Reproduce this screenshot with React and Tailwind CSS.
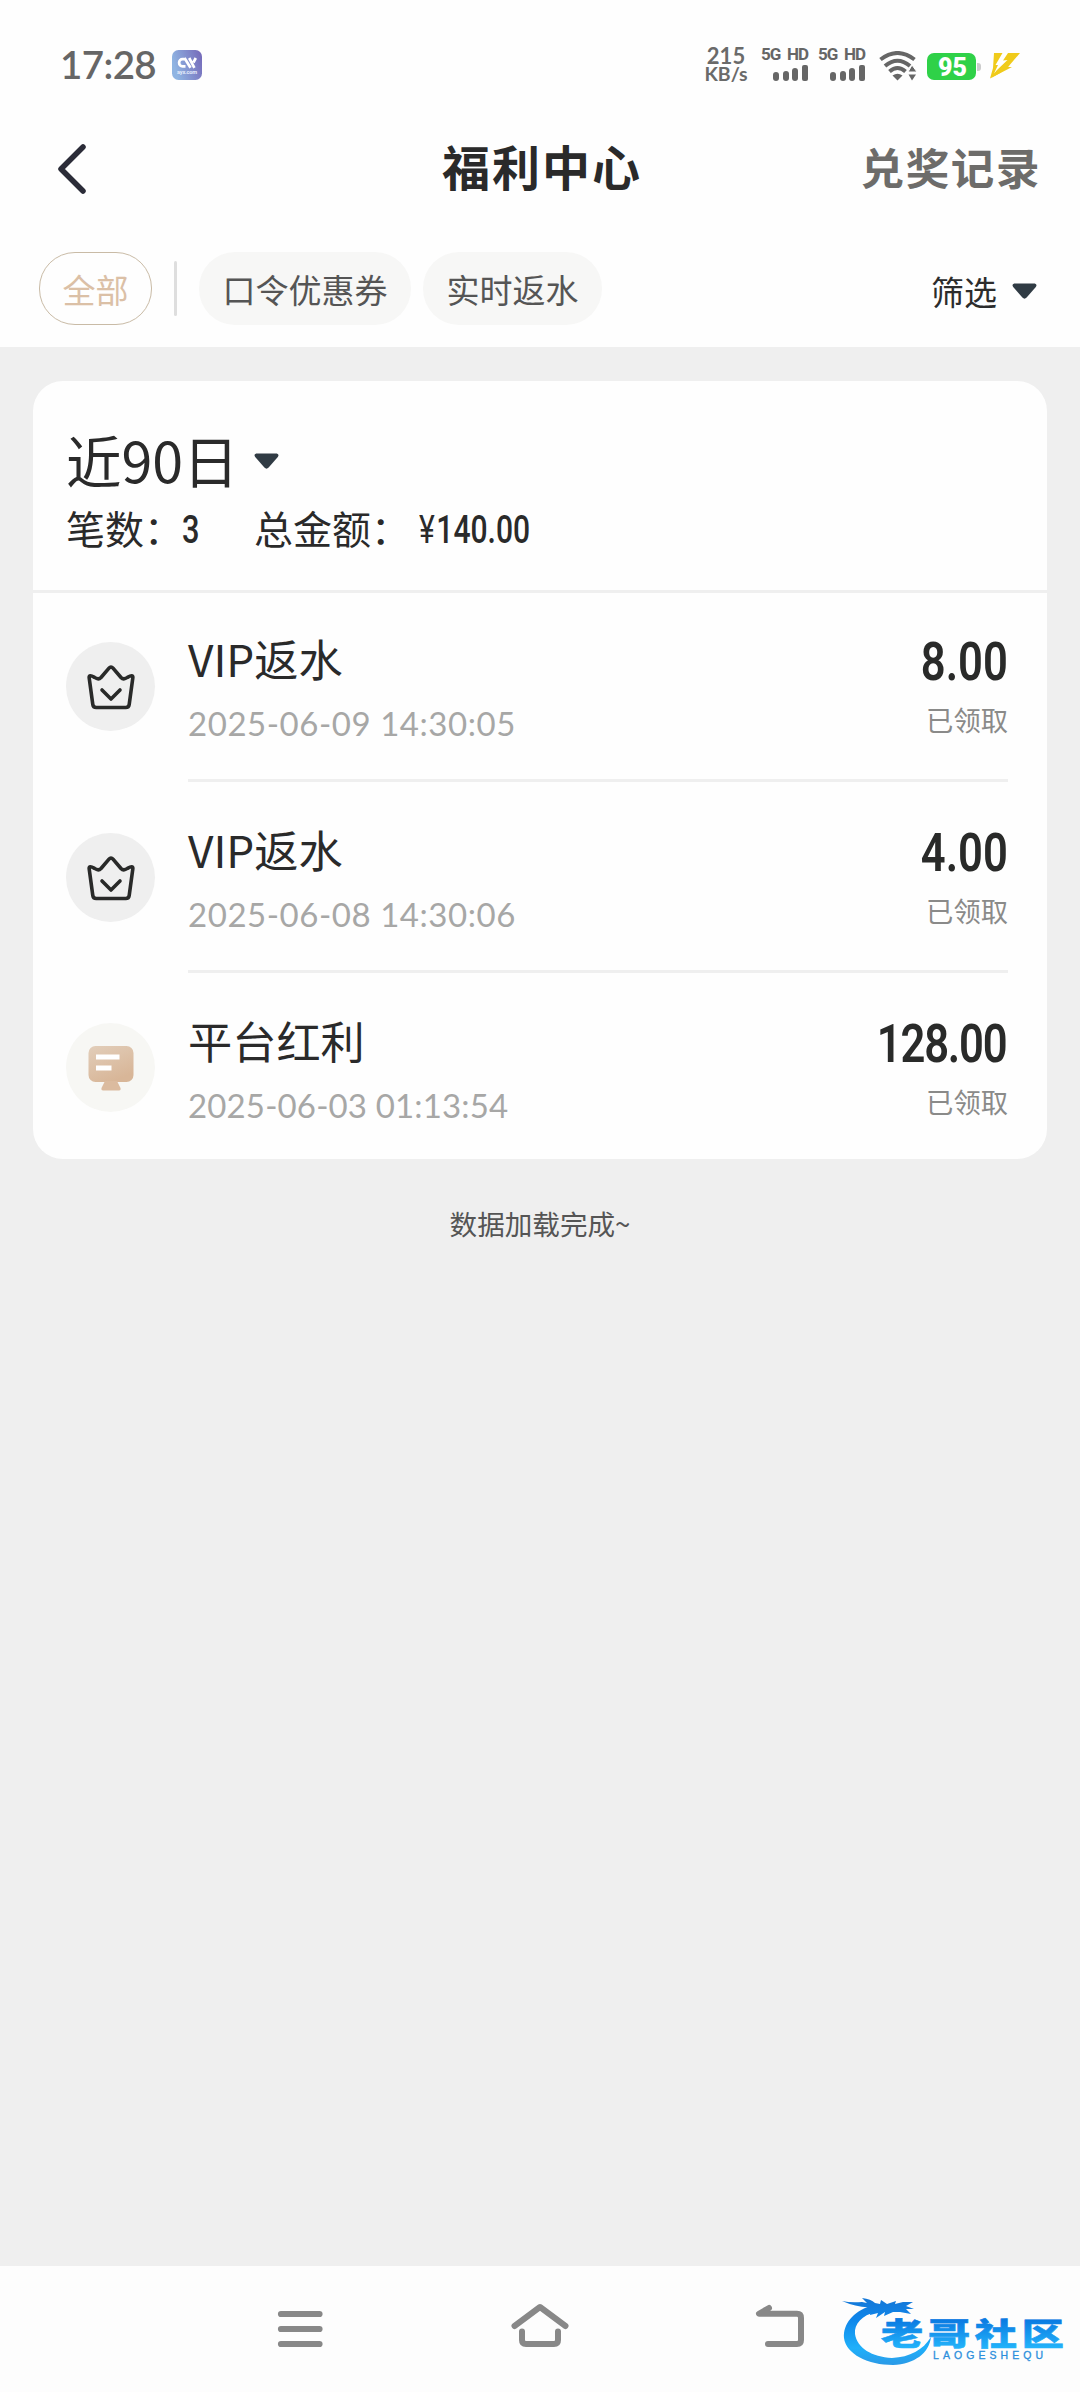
import React from "react";

const CJK = "font-['Noto_Sans_CJK_SC','Noto_Sans',sans-serif]";
const LATO = "font-['Lato','Noto_Sans_CJK_SC',sans-serif]";
const ROBOTO = "font-['Roboto','Noto_Sans_CJK_SC',sans-serif]";

const records = [
  { icon: "crown", title: "VIP返水", time: "2025-06-09 14:30:05", amount: "8.00", status: "已领取", tracking: "tracking-[0.55px]", amountFit: "scale-x-[0.8]" },
  { icon: "crown", title: "VIP返水", time: "2025-06-08 14:30:06", amount: "4.00", status: "已领取", tracking: "tracking-[0.55px]", amountFit: "scale-x-[0.8]" },
  { icon: "board", title: "平台红利", time: "2025-06-03 01:13:54", amount: "128.00", status: "已领取", tracking: "tracking-[0.15px]", amountFit: "scale-x-[0.8] tracking-[-1.5px] pr-[1.5px]" },
];

function Caret() {
  return (
    <svg className="block h-4 w-[25px]" viewBox="0 0 25 16">
      <path d="M2.2 0.5H22.8Q25.6 1.5 23.8 4L14.6 14.6Q12.5 16.8 10.4 14.6L1.2 4Q-.6 1.5 2.2.5Z" fill="#303b44" />
    </svg>
  );
}

function Signal() {
  return (
    <div className="flex w-[47px] flex-col items-end">
      <div className={`${ROBOTO} flex h-[17px] w-[47px] justify-between text-[17px] leading-[17px] font-bold text-[#666]`}>
        <span className="tracking-[-1px]">5G</span>
        <span className="tracking-[-1px]">HD</span>
      </div>
      <div className="mt-[2px] flex h-4 w-[35px] items-end justify-between">
        <i className="h-[9px] w-[6px] rounded-[3px] bg-[#666]" />
        <i className="h-[10px] w-[6px] rounded-[3px] bg-[#666]" />
        <i className="h-[13px] w-[6px] rounded-[3px] bg-[#666]" />
        <i className="h-4 w-[6px] rounded-[2px] bg-[#666]" />
      </div>
    </div>
  );
}

function StatusBar() {
  return (
    <div className="flex h-[128px] items-start pt-[46px] pl-[60px]">
      <div className={`${LATO} mt-[-5px] w-[112px] text-[38.5px] leading-[46px] font-semibold tracking-[-0.6px] text-[#666]`}>17:28</div>
      <svg className="mt-1 h-[30px] w-[30px]" viewBox="0 0 30 30">
        <defs>
          <linearGradient id="app" x1="0" y1="0.3" x2="1" y2="0">
            <stop offset="0" stopColor="#8fb4e2" />
            <stop offset="1" stopColor="#7467b8" />
          </linearGradient>
        </defs>
        <rect width="30" height="30" rx="6.5" fill="url(#app)" />
        <path d="M13.5 9.2H10.5a3.4 3.6 0 1 0 0 7.2H13.5M12.5 8l6 9.8M17.2 8l5.2 9.8M23.8 8l-2.4 4.5" fill="none" stroke="#fff" strokeWidth="2.7" />
        <text x="5" y="24.2" textLength="20" fontSize="5.6" fontFamily="Roboto" fontWeight="700" fill="#e4ebfa">ayx.com</text>
      </svg>
      <div className={`${LATO} ml-[501px] flex w-[46px] flex-col items-center font-bold text-[#6a6a6a]`}>
        <span className="h-[19px] text-[22px] leading-[19px]">215</span>
        <span className="h-[18px] text-[19.5px] leading-[18px]">KB/s</span>
      </div>
      <div className="ml-[12px] flex gap-[10px]">
        <Signal />
        <Signal />
      </div>
      <svg className="mt-[5px] ml-[14px] h-[30px] w-[38px]" viewBox="0 0 38 30">
        <g fill="none" stroke="#666" strokeWidth="4">
          <path d="M1.5 8.5Q18.5-4.5 35.5 8.5" />
          <path d="M6 15Q18.5 4.5 31 15" />
          <path d="M10.5 20.5Q18.5 13.5 26.5 20.5" />
        </g>
        <path d="M13.5 24.5Q18.5 21 23.5 24.5L18.5 29.5Z" fill="#666" />
        <path d="M33 14l5 7h-9z" fill="#666" stroke="#fff" strokeWidth="1" />
        <path d="M33 29.5l4-6h-7.500z" fill="#666" />
      </svg>
      <div className="mt-[7px] ml-[10px] flex items-center">
        <div className={`${ROBOTO} flex h-[27px] w-[49px] items-center justify-center rounded-[7px] bg-[#2fd148] text-[25px] leading-[27px] font-black text-white`}>
          <span className="mt-px ml-[2px]">95</span>
        </div>
        <i className="ml-px h-2 w-[4px] rounded-r-[3px] bg-[#ccc]" />
      </div>
      <svg className="mt-[7px] ml-[9px] h-[26px] w-[30px]" viewBox="0 0 30 26">
        <path d="M4 0H30L18 14H22L0 25.500L3 15Z" fill="#f0cb1b" />
        <path d="M12.500 0H18L13 7.500L17.500 7L7 17L4 20.500L8 12H5.500Z" fill="#fff" />
        <path d="M12 16L20 12L10 20L1 25Z" fill="#f0cb1b" />
      </svg>
    </div>
  );
}

function Header() {
  return (
    <div className={`${CJK} grid h-[82px] grid-cols-[1fr_200px_1fr] items-center`}>
      <svg className="ml-[57px] h-[50px] w-[30px]" viewBox="0 0 30 50">
        <path d="M26 3L4 25L26 47" fill="none" stroke="#2b2c38" strokeWidth="5.5" strokeLinecap="round" strokeLinejoin="round" />
      </svg>
      <h1 className="mt-[-8px] pl-[2px] text-[48px] leading-[60px] font-bold tracking-[2px] whitespace-nowrap text-[#2a2a2a]">福利中心</h1>
      <span className="mt-[-5px] mr-[39px] justify-self-end text-[43.5px] leading-[60px] font-bold tracking-[1.6px] text-[#6d6c6a]">兑奖记录</span>
    </div>
  );
}

function Filters() {
  return (
    <div className={`${CJK} flex h-[137px] items-start pt-[42px] pr-[43px] pl-[39px] text-[33px] leading-[74px] text-[#555]`}>
      <div className="flex h-[73px] w-[113px] justify-center rounded-[36px] border border-[#c9bba6] leading-[73px] text-[#dbc0a6]">全部</div>
      <i className="mt-[9px] ml-[22px] h-[55px] w-[3px] rounded bg-[#dedede]" />
      <div className="ml-[22px] flex h-[73px] w-[212px] justify-center rounded-[36px] bg-[#f7f7f6]">口令优惠券</div>
      <div className="ml-[12px] flex h-[73px] w-[179px] justify-center rounded-[36px] bg-[#f7f7f6]">实时返水</div>
      <div className="mt-[2px] ml-auto flex items-center gap-[15px] text-[#2c2c2c]">
        <span>筛选</span>
        <Caret />
      </div>
    </div>
  );
}

function RecordIcon({ kind }) {
  if (kind === "crown") {
    return (
      <div className="flex h-[89px] w-[89px] items-center justify-center rounded-full bg-[#efefef]">
        <svg className="h-[46px] w-[48px]" viewBox="0 0 48 46" fill="none" stroke="#292a29" strokeWidth="3.600" strokeLinecap="round" strokeLinejoin="round">
          <path d="M22 4.200Q24 1.800 26 4.200L34 13.500Q36.500 16.200 40.500 13.400Q46.500 9.700 45.800 14L42.200 40.500Q41.800 43.500 38.800 43.500H9.200Q6.200 43.500 5.800 40.500L2.200 14Q1.500 9.700 7.500 13.400Q11.500 16.200 14 13.500Z" />
          <path d="M15 26L24 35L33 26" />
        </svg>
      </div>
    );
  }
  return (
    <div className="mt-[-1px] flex h-[89px] w-[89px] items-center justify-center rounded-full bg-[#f7f7f4]">
      <svg className="h-[46px] w-[46px]" viewBox="0 0 46 46">
        <defs>
          <linearGradient id="board" x1="0" y1="0" x2="0.500" y2="1">
            <stop offset="0" stopColor="#e2ceba" />
            <stop offset="1" stopColor="#d8b698" />
          </linearGradient>
        </defs>
        <rect x="0.500" y="1" width="45" height="36" rx="7" fill="url(#board)" />
        <path d="M17 36H29L32.500 43Q33 45.500 31 45.500H15Q13 45.500 13.500 43Z" fill="#dbbb9f" />
        <path d="M8 9.500H31.500V14.500H8ZM8 20.500H23.500V25.500H8Z" fill="#fff" />
      </svg>
    </div>
  );
}

function Record({ item, last }) {
  return (
    <div className="flex h-[191px] pl-[33px]">
      <div className="mt-[51px]">
        <RecordIcon kind={item.icon} />
      </div>
      <div className={`mr-[39px] ml-[33px] flex grow justify-between ${last ? "" : "border-b-[3px] border-[#efefef]"}`}>
        <div className="flex flex-col pt-[37px]">
          <span className={`${CJK} text-[44.2px] leading-[60px] text-[#2a2a2a]`}>{item.title}</span>
          <span className={`${LATO} ${item.tracking} mt-[13px] text-[33px] leading-[44px] whitespace-nowrap text-[#a7a7a6]`}>{item.time}</span>
        </div>
        <div className="flex flex-col items-end pt-[38px]">
          <span className={`${ROBOTO} ${item.amountFit} origin-right text-[54.5px] leading-[64px] font-semibold text-[#292a29]`}>{item.amount}</span>
          <span className={`${CJK} mt-[6px] text-[27.3px] leading-[40px] text-[#8a8a89]`}>{item.status}</span>
        </div>
      </div>
    </div>
  );
}

function Summary() {
  return (
    <div className={`${CJK} h-[212px] border-b-[3px] border-[#efefef] pt-[43px] pl-[33px] text-[#2a2a2a]`}>
      <div className="flex items-center gap-[15px]">
        <span className="text-[55.5px] leading-[70px]">近90日</span>
        <div className="mt-[4px]">
          <Caret />
        </div>
      </div>
      <div className="mt-[2px] flex items-center text-[39px] leading-[56px] whitespace-nowrap">
        <span className="w-[116px]">笔数：</span>
        <span className={`${ROBOTO} mt-[6px] w-[72px] origin-left scale-x-[0.8] text-[38.5px] font-medium`}>3</span>
        <span className="w-[165px]">总金额：</span>
        <span className={`${ROBOTO} mt-[6px] origin-left scale-x-[0.78] text-[38.5px] font-medium`}>
          <span className="mr-[2px] font-normal">¥</span>140.00
        </span>
      </div>
    </div>
  );
}

function NavBar() {
  return (
    <div className="flex h-[126px] items-start bg-[#fdfdfd] pt-[35px] pl-[270px]">
      <svg className="h-[54px] w-[60px]" viewBox="270 2301 60 54" fill="none" stroke="#888" strokeWidth="6.200" strokeLinecap="round">
        <path d="M281 2314H319.500M281 2329H319.500M281 2344H319.500" />
      </svg>
      <svg className="ml-[180px] h-[54px] w-[60px]" viewBox="510 2301 60 54" fill="none" stroke="#888" strokeWidth="6" strokeLinecap="round" strokeLinejoin="round">
        <path d="M514.500 2326L540 2307L565.500 2326M522 2331.500V2340Q522 2344 526 2344H554Q558 2344 558 2340V2331.500" />
      </svg>
      <svg className="ml-[180px] h-[54px] w-[60px]" viewBox="750 2301 60 54" fill="none" stroke="#888" strokeWidth="6" strokeLinecap="round" strokeLinejoin="round">
        <path d="M769 2308L759 2313.800H797Q801 2313.800 801 2318V2340Q801 2344 797 2344H768" />
      </svg>
    </div>
  );
}

function Watermark() {
  return (
    <svg className="absolute right-[12px] bottom-[22px] h-[78px] w-[230px]" viewBox="838 2292 230 78">
      <defs>
        <linearGradient id="wm" x1="0" y1="2300" x2="0" y2="2364" gradientUnits="userSpaceOnUse">
          <stop offset="0" stopColor="#1478d8" />
          <stop offset="0.300" stopColor="#0f86ea" />
          <stop offset="0.750" stopColor="#1fb0fa" />
          <stop offset="1" stopColor="#2a9be8" />
        </linearGradient>
        <linearGradient id="wmText" x1="0" y1="0" x2="0" y2="1">
          <stop offset="0.250" stopColor="#0b7be2" />
          <stop offset="0.850" stopColor="#22b2fa" />
        </linearGradient>
      </defs>
      <path d="M870 2306C853 2312 843 2324 844 2338C846 2354 868 2365 893 2365C915 2364 929 2353 931 2337C923 2350 910 2357 892 2358C872 2357 857 2348 855 2334C854 2324 862 2315 876 2312Z" fill="url(#wm)" />
      <path d="M842 2301Q851 2303 862 2302L867 2303L862 2298Q871 2299 875 2303L880 2304L881 2300L887 2304L896 2301L895 2304L903 2302L913 2302L906 2306L914 2309L906 2309L911 2314L900 2312L893 2312L884 2316L885 2312L876 2318L878 2313L870 2315L871 2307Q858 2308 842 2301Z" fill="url(#wm)" />
      <g transform="translate(881 2345) scale(1.360 1)">
        <text x="0" y="0" fontSize="31" letterSpacing="3.500" fontWeight="900" fontFamily="'Noto Sans CJK SC', sans-serif" fill="url(#wmText)" stroke="url(#wmText)" strokeWidth="0.600">老哥社区</text>
      </g>
      <text x="933" y="2358.600" textLength="110" fontSize="10.500" fontFamily="'Liberation Sans', sans-serif" fill="#2b8fdc" stroke="#2b8fdc" strokeWidth="0.300">LAOGESHEQU</text>
    </svg>
  );
}

export default function App() {
  return (
    <div className="relative flex h-[2392px] w-[1080px] flex-col overflow-hidden bg-[#efefef]">
      <div className="bg-[#fefefe]">
        <StatusBar />
        <Header />
        <Filters />
      </div>
      <div className="mx-[33px] mt-[34px] h-[778px] shrink-0 overflow-hidden rounded-[30px] bg-[#fefefe]">
        <Summary />
        <div className="mt-[-2px]">
          {records.map((item, i) => (
            <Record key={item.time} item={item} last={i === records.length - 1} />
          ))}
        </div>
      </div>
      <p className={`${CJK} mt-[44px] text-center text-[27.600px] leading-[40px] text-[#555]`}>数据加载完成~</p>
      <div className="grow" />
      <NavBar />
      <Watermark />
    </div>
  );
}
